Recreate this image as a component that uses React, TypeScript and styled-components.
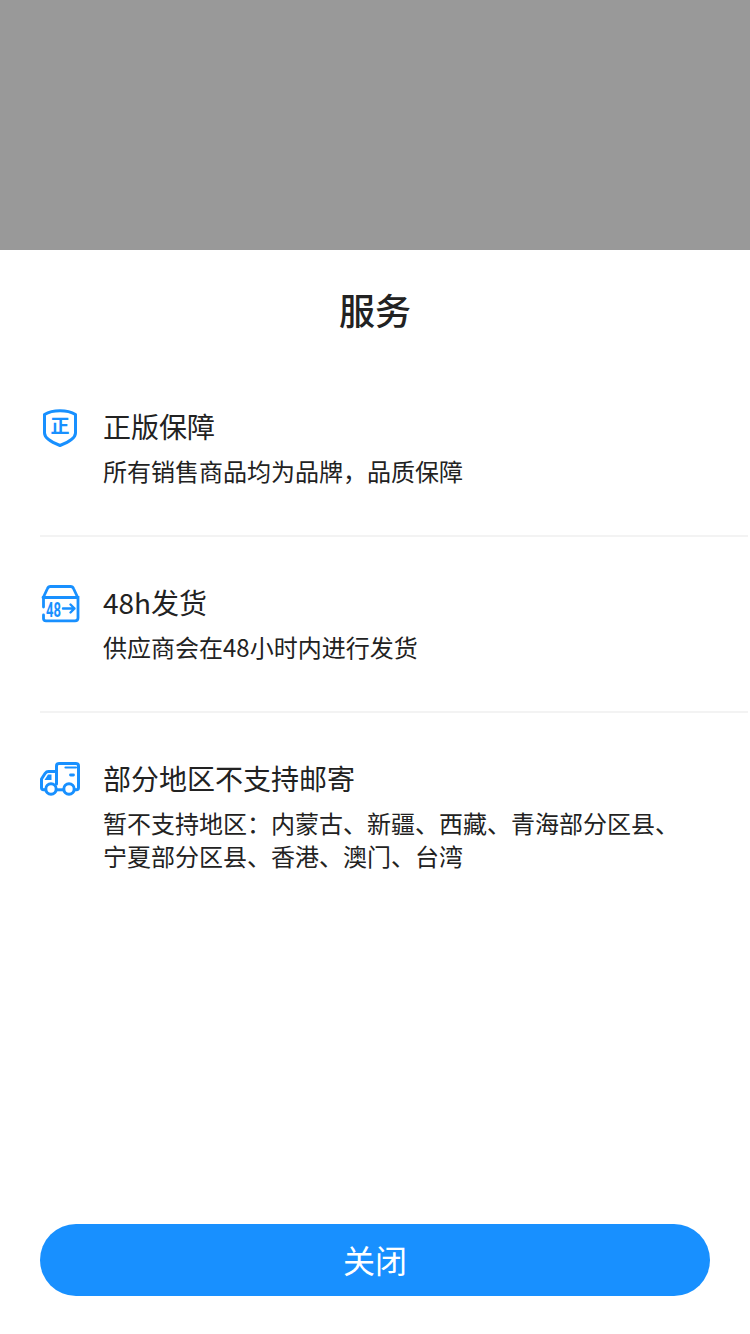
import React from 'react';
import styled, { createGlobalStyle } from 'styled-components';

const GlobalStyle = createGlobalStyle`
  html, body {
    margin: 0;
    padding: 0;
    background: #fff;
    font-family: "Noto Sans CJK SC", "Liberation Sans", sans-serif;
  }
`;

const Page = styled.div`
  width: 750px;
  height: 1334px;
  display: flex;
  flex-direction: column;
  overflow: hidden;
`;

const Backdrop = styled.div`
  flex: 0 0 250px;
  background: #999;
`;

const Sheet = styled.div`
  flex: 1;
  display: flex;
  flex-direction: column;
  background: #fff;
`;

const Title = styled.h1`
  margin: 0;
  padding-top: 34px;
  height: 50px;
  font-size: 36px;
  line-height: 50px;
  font-weight: 500;
  text-align: center;
  color: #222;
`;

const List = styled.div`
  flex: 1;
  display: flex;
  flex-direction: column;
  padding: 72px 2px 0 40px;
`;

const Row = styled.div<{ $last?: boolean }>`
  display: flex;
  height: ${p => (p.$last ? 'auto' : '129px')};
  margin-bottom: 45px;
  border-bottom: ${p => (p.$last ? 'none' : '2px solid #f3f3f3')};
`;

const IconSlot = styled.div`
  flex: 0 0 66px;
  height: 44px;
  margin: 2px 0 0 -2px;
`;

const Body = styled.div`
  flex: 1;
  display: flex;
  flex-direction: column;
`;

const RowTitle = styled.div`
  font-size: 28px;
  line-height: 40px;
  height: 48px;
  margin-left: -1px;
  color: #222;
`;

const RowText = styled.div`
  font-size: 24px;
  line-height: 33px;
  color: #222;
  width: 590px;
  margin-left: -1px;
`;

const Footer = styled.div`
  padding: 0 40px 38px;
`;

const CloseButton = styled.button`
  display: block;
  width: 100%;
  height: 72px;
  border: none;
  border-radius: 36px;
  background: #1890ff;
  color: #fff;
  font-family: inherit;
  font-size: 32px;
  padding: 0 0 3px;
`;

const blue = '#1890ff';

const ShieldIcon = () => (
  <svg width="44" height="44" viewBox="0 0 44 44" fill="none">
    <path
      d="M6.5 6.5C11 3.8 16 2.8 22 2.8S33 3.8 37.5 6.5V25C37.5 30 31 34 22 37.5C13 34 6.5 30 6.5 25Z"
      stroke={blue}
      strokeWidth="3"
      strokeLinejoin="round"
    />
    <text x="22" y="25" textAnchor="middle" fontSize="19" fontWeight="700" fill={blue} fontFamily="Noto Sans CJK SC, sans-serif">正</text>
  </svg>
);

const BoxIcon = () => (
  <svg width="44" height="44" viewBox="0 0 44 44" fill="none">
    <path
      d="M5.5 13L9.5 4.5C10 3.2 11 2.5 12.5 2.5H32.5C34 2.5 35 3.2 35.5 4.5L39.5 13"
      stroke={blue}
      strokeWidth="2.8"
      strokeLinejoin="round"
    />
    <path d="M5 13.5H40V34C40 35.8 39 36.8 37 36.8H8C6.2 36.8 5.5 36 5.5 34.5V31" stroke={blue} strokeWidth="2.8" strokeLinecap="round" />
    <path d="M5.5 13.5V23" stroke={blue} strokeWidth="2.8" strokeLinecap="round" />
    <text x="8" y="32.5" fontSize="21" fontWeight="700" fill={blue} fontFamily="Roboto, sans-serif" textLength="15" lengthAdjust="spacingAndGlyphs">48</text>
    <path d="M25 24.5H36.5M32.5 20.5L36.5 24.5L32.5 28.5" stroke={blue} strokeWidth="2.4" strokeLinecap="round" strokeLinejoin="round" />
  </svg>
);

const TruckIcon = () => (
  <svg width="44" height="44" viewBox="0 0 44 44" fill="none">
    <path
      d="M18.5 24V6C18.5 4.4 19.5 3.5 21 3.5H38C39.5 3.5 40.5 4.4 40.5 6V27.5C40.5 29 39.8 29.8 38.5 29.8H36.5"
      stroke={blue}
      strokeWidth="3"
      strokeLinecap="round"
    />
    <path d="M18.5 29.8H25.5" stroke={blue} strokeWidth="3" />
    <path
      d="M18.5 11.5H10.5C9 11.5 8 12.2 7.2 13.3L3.5 19V27.5C3.5 29 4.2 29.8 5.5 29.8H7.5"
      stroke={blue}
      strokeWidth="3"
      strokeLinecap="round"
      strokeLinejoin="round"
    />
    <path d="M6.5 20L10 14.5H13.5V20Z" fill={blue} />
    <circle cx="13" cy="29" r="5.2" fill="#fff" stroke={blue} strokeWidth="3" />
    <circle cx="31" cy="29" r="5.2" fill="#fff" stroke={blue} strokeWidth="3" />
    <path d="M27.5 7.5H38" stroke={blue} strokeWidth="2.2" strokeLinecap="round" />
    <path d="M32.5 15H35.5" stroke={blue} strokeWidth="2.8" strokeLinecap="round" />
  </svg>
);

const services = [
  { icon: <ShieldIcon />, title: '正版保障', text: '所有销售商品均为品牌，品质保障' },
  { icon: <BoxIcon />, title: '48h发货', text: '供应商会在48小时内进行发货' },
  {
    icon: <TruckIcon />,
    title: '部分地区不支持邮寄',
    text: '暂不支持地区：内蒙古、新疆、西藏、青海部分区县、宁夏部分区县、香港、澳门、台湾',
  },
];

const App: React.FC = () => {
  return (
    <Page>
      <GlobalStyle />
      <Backdrop />
      <Sheet>
        <Title>服务</Title>
        <List>
          {services.map((s, i) => (
            <Row key={s.title} $last={i === services.length - 1}>
              <IconSlot>{s.icon}</IconSlot>
              <Body>
                <RowTitle>{s.title}</RowTitle>
                <RowText>{s.text}</RowText>
              </Body>
            </Row>
          ))}
        </List>
        <Footer>
          <CloseButton>关闭</CloseButton>
        </Footer>
      </Sheet>
    </Page>
  );
};

export default App;
